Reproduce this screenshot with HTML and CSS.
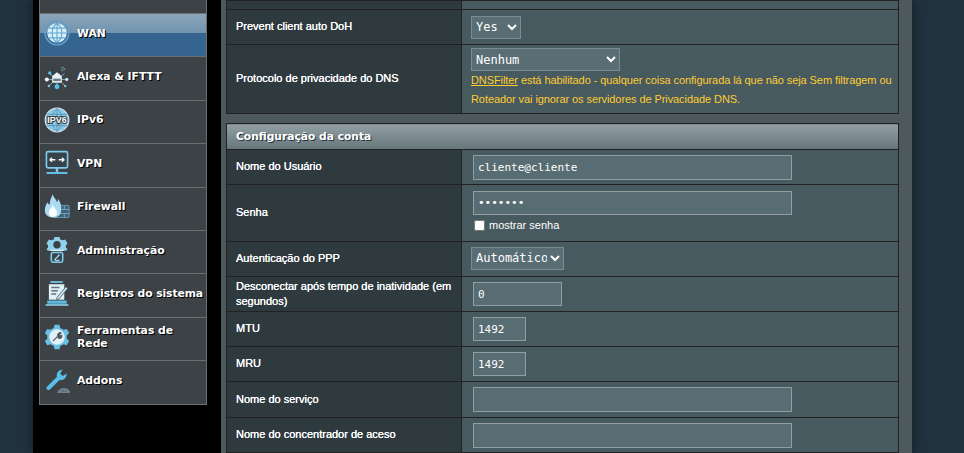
FILE: index.html
```html
<!DOCTYPE html>
<html lang="pt">
<head>
  <meta charset="UTF-8">
  <meta name="viewport" content="width=device-width, initial-scale=1.0">
  <title>WAN</title>
  <link rel="stylesheet" href="styles.css">
</head>
<body>
  <div class="wrap">
    <nav class="side">
      <div class="menu">
        <div class="item cut"></div>
        <a class="item active">
          <svg class="ico" viewBox="0 0 32 32"><circle cx="16" cy="16" r="14.500" fill="none" stroke="#5f9fc4" stroke-width="2"/><circle cx="16" cy="16" r="12" fill="#d8eef8"/><path d="M4 16h24M6 10h20M6 22h20M16 4v24M16 4c-8 6-8 18 0 24M16 4c8 6 8 18 0 24" fill="none" stroke="#5fa8d0" stroke-width="1.300"/></svg>
          <span>WAN</span>
        </a>
        <a class="item">
          <svg class="ico" viewBox="0 0 32 32"><path d="M21 4c2 0 4 1 5 3M21 7c1 0 2 .5 2.500 1.500" fill="none" stroke="#6b97ad" stroke-width="1.500"/><path d="M10 15l6-5 6 5v8H10z" fill="#e8f2f6"/><rect x="11.500" y="18" width="9" height="3" fill="#6d7c84"/><path d="M5 19h5M22 19h5M7 12l4 3M25 12l-4 3M16 23v4M10 23l-3 3M22 23l3 3" stroke="#8fc8e0" stroke-width="1"/><circle cx="3.500" cy="19" r="2.500" fill="#eef6fa"/><circle cx="28" cy="19" r="2" fill="#cfe6f1"/><circle cx="7" cy="11" r="2" fill="#5cc1e8"/><circle cx="16" cy="28" r="3" fill="#4fc3f0"/><circle cx="6" cy="27" r="1.500" fill="#7fc4e0"/><circle cx="26" cy="27" r="1.500" fill="#7fc4e0"/></svg>
          <span>Alexa &amp; IFTTT</span>
        </a>
        <a class="item">
          <svg class="ico" viewBox="0 0 32 32"><circle cx="16" cy="16" r="14.500" fill="#8cc9e6" stroke="#cfe3ec" stroke-width="1.500"/><path d="M3 9h26M3 23h26M16 2v28M16 2c-8 6-8 22 0 28M16 2c8 6 8 22 0 28" fill="none" stroke="#4d8eb0" stroke-width="1"/><text x="16" y="20" class="ipv6">IPV6</text></svg>
          <span>IPv6</span>
        </a>
        <a class="item">
          <svg class="ico" viewBox="0 0 32 32"><rect x="3" y="2" width="26" height="20" rx="2" fill="#37424a" stroke="#7fcdec" stroke-width="2"/><path d="M7 12h7M7 12l3-2.500M7 12l3 2.500M25 12h-7M25 12l-3-2.500M25 12l-3 2.500" fill="none" stroke="#f2f7f9" stroke-width="1.700"/><path d="M16 22v5" stroke="#7fcdec" stroke-width="3"/><rect x="3" y="27" width="26" height="2.500" rx="1" fill="#5cc1e8"/></svg>
          <span>VPN</span>
        </a>
        <a class="item">
          <svg class="ico" viewBox="0 0 32 32"><rect x="12" y="14" width="19" height="15" rx="1" fill="#3f6478" stroke="#6fa6c2"/><path d="M20 19h11M18 24h13M25 14v5M25 24v5" stroke="#7eb0c9" stroke-width="1"/><path d="M11 0c0 4 4 6 5 10 1-1 1-3 1-4 3 3 5 8 4 14 0 6-4 9-10 9-5 0-10-3-10-9 0-5 2-7 3-10 1 2 2 3 3 3 0-5 2-9 4-13z" fill="#a9dcf2"/><path d="M11 13c0 3 5 6 5 10a5 5 0 0 1-10 0c0-4 4-6 5-10z" fill="#fff"/></svg>
          <span>Firewall</span>
        </a>
        <a class="item">
          <svg class="ico" viewBox="0 0 32 32"><path d="M13 0h6l1 3 3 1 3-1 3 5-2 2v3l2 2-2 2H5l-2-2 2-2v-3L3 8l3-5 3 1 3-1z" fill="#8fd0ec"/><circle cx="16" cy="9.500" r="4.500" fill="#3b4044"/><path d="M8 16.500h16" stroke="#e8f4f9" stroke-width="1.500"/><rect x="9" y="19" width="14" height="12" rx="2" fill="#37424a" stroke="#7fcdec" stroke-width="2"/><path d="M13 28l6-6M19 22l-2 .5M13 28a5 5 0 0 0 6 0" fill="none" stroke="#a9dcf2" stroke-width="1.600"/></svg>
          <span>Administração</span>
        </a>
        <a class="item">
          <svg class="ico" viewBox="0 0 32 32"><rect x="8" y="0" width="15" height="2.500" fill="#6fb4d4"/><rect x="6" y="4" width="19" height="19" fill="#e3eff5"/><path d="M9 8h10M9 12h8M9 16h6" stroke="#5c7380" stroke-width="1.600"/><path d="M16 20l11-13 2.500 2L18.500 22l-3 1z" fill="#b9dff0" stroke="#37424a" stroke-width=".8"/><path d="M4 24h24v4H4z" fill="#5cb8e0"/><path d="M2 29.500h28" stroke="#8fd0ec" stroke-width="2"/></svg>
          <span class="one-line">Registros do sistema</span>
        </a>
        <a class="item">
          <svg class="ico" viewBox="0 0 32 32"><path d="M13 1h6l1 4 4 2 4-1 3 5-3 3v4l3 3-3 5-4-1-4 2-1 4h-6l-1-4-4-2-4 1-3-5 3-3v-4L1 11l3-5 4 1 4-2z" fill="#69bfe4"/><circle cx="16" cy="16" r="9.500" fill="#e3f1f7"/><path d="M11 21l6-6M17 15c-1-3 2-5 4-4l-2 2 1 2 2-1c.5 3-2 4.500-5 3" fill="#4d5a61" stroke="#4d5a61" stroke-width="1.500"/></svg>
          <span>Ferramentas de Rede</span>
        </a>
        <a class="item">
          <svg class="ico" viewBox="0 0 32 32"><path d="M3 25l13-13c-1-4 1-8 7-9l-3 5 3 3 5-3c0 6-5 9-9 8L7 28c-2 1-5-1-4-3z" fill="#59bfe9"/><path d="M18 31a7.500 7.500 0 0 1 13 0z" fill="none" stroke="#71808a" stroke-width="2.500"/><path d="M24.500 30l2-3" stroke="#71808a" stroke-width="1.500"/></svg>
          <span>Addons</span>
        </a>
      </div>
    </nav>

    <main class="panel">
      <table class="form">
        <colgroup><col class="col-label"><col></colgroup>
        <tr class="cut-row"><th></th><td></td></tr>
        <tr class="h35">
          <th>Prevent client auto DoH</th>
          <td><select class="sel sel-yes"><option>Yes</option><option>No</option></select></td>
        </tr>
        <tr class="h69">
          <th>Protocolo de privacidade do DNS</th>
          <td>
            <select class="sel sel-dns"><option>Nenhum</option></select>
            <div class="warn"><a href="#">DNSFilter</a> está habilitado - qualquer coisa configurada lá que não seja Sem filtragem ou Roteador vai ignorar os servidores de Privacidade DNS.</div>
          </td>
        </tr>
      </table>

      <table class="form">
        <colgroup><col class="col-label"><col></colgroup>
        <thead><tr><td colspan="2" class="head">Configuração da conta</td></tr></thead>
        <tr class="h35">
          <th>Nome do Usuário</th>
          <td><input class="txt w-long" type="text" value="cliente@cliente"></td>
        </tr>
        <tr class="h57">
          <th>Senha</th>
          <td>
            <input class="txt w-long short" type="password" value="1234567">
            <label class="show"><input type="checkbox">mostrar senha</label>
          </td>
        </tr>
        <tr class="h35">
          <th>Autenticação do PPP</th>
          <td><select class="sel sel-auth"><option>Automático</option></select></td>
        </tr>
        <tr class="h35">
          <th>Desconectar após tempo de inatividade (em segundos)</th>
          <td><input class="txt w-mid short" type="text" value="0"></td>
        </tr>
        <tr class="h35">
          <th>MTU</th>
          <td><input class="txt w-short short" type="text" value="1492"></td>
        </tr>
        <tr class="h35">
          <th>MRU</th>
          <td><input class="txt w-short short" type="text" value="1492"></td>
        </tr>
        <tr class="h36">
          <th>Nome do serviço</th>
          <td><input class="txt w-long" type="text"></td>
        </tr>
        <tr class="h35">
          <th>Nome do concentrador de aceso</th>
          <td><input class="txt w-long" type="text"></td>
        </tr>
      </table>
    </main>
  </div>
</body>
</html>
```

FILE: styles.css
```css
html, body { margin: 0; height: 453px; overflow: hidden; }
body { background: #21333e; font-family: "Liberation Sans", Arial, sans-serif; font-size: 11px; color: #fff; }
.wrap { display: flex; height: 453px; margin-left: 33px; width: 879px; background: #000; box-shadow: 0 0 12px rgba(0,0,0,.5); }

.side { width: 188px; flex: none; padding-left: 6px; box-sizing: border-box; }
.menu { width: 168px; background: #3c4245; border: 1px solid #6b7071; border-top: 0; box-sizing: border-box; }
.item { display: flex; align-items: center; height: 43.4px; box-sizing: border-box; border-top: 1px solid #6b7071; color: #fff; font: bold 10.8px/13px "DejaVu Sans", Verdana, sans-serif; text-shadow: 1px 1px 0 #000; padding-bottom: 4px; }
.item.cut { height: 13px; border-top: 0; }
.item.active { background: linear-gradient(#8ba5bb 0, #7194ae 45%, #35648f 46%, #35648f 100%); }
.ico { width: 26px; height: 26px; margin: 0 7px 0 4px; flex: none; }
.item span { display: block; max-width: 128px; }
.item .one-line { white-space: nowrap; letter-spacing: -.1px; }
.ipv6 { font: bold 11px "Liberation Sans", sans-serif; fill: #f4f8fa; stroke: #3b4044; stroke-width: 2.500px; paint-order: stroke; text-anchor: middle; text-shadow: none; }

.panel { flex: 1; background: #4d595d; padding: 0 6px 0 5px; box-sizing: border-box; min-width: 0; }
.form { width: 673px; table-layout: fixed; border-collapse: collapse; margin-bottom: 9px; }
.col-label { width: 235px; }
.form th, .form td { border: 1px solid #222; padding: 0; }
.form th { padding: 0 2px 1px 9px; background: #2f3a3f; font-weight: normal; text-align: left; line-height: 15px; text-shadow: 0 0 0 #fff; }
.form td { background: #475a5f; padding-left: 9px; }
.form .head { height: 25px; padding-left: 9px; background: linear-gradient(#92a0a5, #66757a); font: bold 10.7px "DejaVu Sans", Verdana, sans-serif; text-shadow: 1px 1px 0 #2a3438; }

.cut-row { height: 9px; }
.h35 { height: 35px; }
.h36 { height: 36px; }
.h57 { height: 57px; }
.h69 { height: 69px; }

.sel, .txt { box-sizing: border-box; color: #fff; background: #596d74; font: 12px "DejaVu Sans Mono", monospace; display: block; margin: 0; }
.sel { border: 1px solid #7d8a8f; padding: 0; height: 23px; }
.sel-yes { width: 50px; }
.sel-dns { width: 149px; }
.sel-auth { width: 93px; position: relative; top: -1px; }
.txt { border: 1px solid #929ea1; height: 25px; margin-left: 2px; padding: 0 4px; background: #576d73; outline: none; font-size: 11px; }
.txt.short { height: 24px; }
.w-long { width: 319px; }
.w-mid { width: 89px; }
.w-short { width: 53px; }

.warn { color: #ffcc33; line-height: 19px; letter-spacing: -.08px; padding-bottom: 1px; }
.warn a { color: #ffcc33; }
.show { display: flex; align-items: center; margin: 3px 0 3px 3px; height: 15px; }
.show input { margin: 0 4px 0 0; width: 11px; height: 11px; }
```
